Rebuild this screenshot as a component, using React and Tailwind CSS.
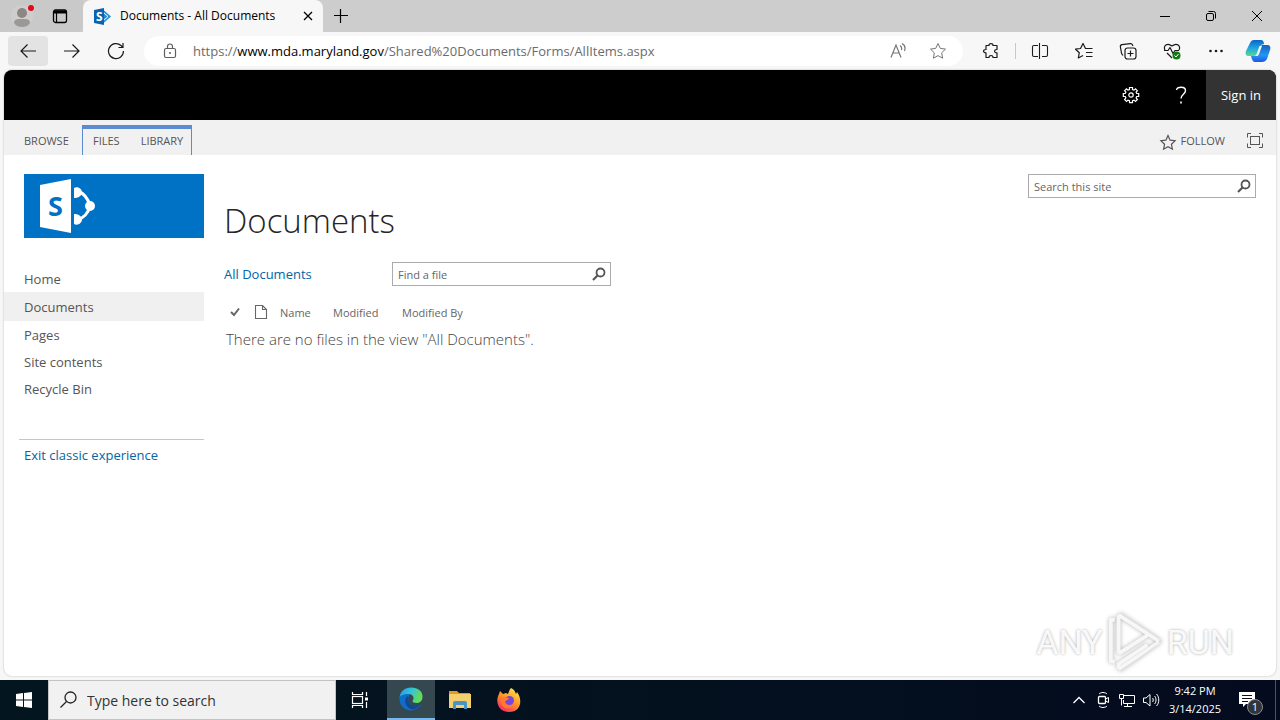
import { useState } from 'react';

const navItems = [
  { label: 'Home', height: 'h-[27px]' },
  { label: 'Documents', height: 'h-[29px]', active: true },
  { label: 'Pages', height: 'h-[27px]' },
  { label: 'Site contents', height: 'h-[27px]' },
  { label: 'Recycle Bin', height: 'h-[27px]' }
];

function Icon({ size = 16, className = '', children }) {
  return (
    <svg
      width={size}
      height={size}
      viewBox={`0 0 ${size} ${size}`}
      fill="none"
      stroke="currentColor"
      className={`shrink-0 ${className}`}
      aria-hidden="true"
    >
      {children}
    </svg>
  );
}

function ToolButton({ label, className = '', children }) {
  return (
    <button
      aria-label={label}
      className={`w-10 h-[30px] shrink-0 flex items-center justify-center rounded hover:bg-gray-200 ${className}`}
    >
      {children}
    </button>
  );
}

function SharePointBadge() {
  return (
    <svg width="17" height="17" viewBox="0 0 17 17" className="shrink-0" aria-hidden="true">
      <path d="M9 1.500l8 7-8 7z" fill="#2a8dd4" />
      <path d="M10 5l4 3.500-4 3.500" fill="none" stroke="#fff" strokeWidth="1" />
      <path d="M0 2l10-2v17L0 15z" fill="#0b64b0" />
      <text x="2" y="13" fontSize="12" fontWeight="700" fill="#fff" fontFamily="Open Sans, sans-serif">S</text>
    </svg>
  );
}

function TabBar() {
  return (
    <div className="h-8 flex items-stretch bg-[#cdcdcd]">
      <div className="w-[83px] flex items-center pl-[11px] gap-[18px] bg-[#c9c9c9] rounded-br-md">
        <button aria-label="Profile" className="w-[23px] flex justify-center">
          <svg width="24" height="24" viewBox="0 0 24 24" className="shrink-0" aria-hidden="true">
            <circle cx="11" cy="12" r="11" fill="#d0cecc" />
            <circle cx="11" cy="9" r="5" fill="#8b8785" />
            <path d="M3 19c0-4 3-4 8-4s8 0 8 4c-2 3-5 4-8 4s-6-1-8-4z" fill="#9b9896" />
            <circle cx="20" cy="4" r="3" fill="#e00b1c" />
          </svg>
        </button>
        <button aria-label="Tab actions">
          <Icon size={16}>
            <rect x="1.500" y="2" width="13" height="12.500" rx="2" strokeWidth="1.300" />
            <path d="M2 4h12" strokeWidth="3" />
            <path d="M4.500 5v9" strokeWidth="1.200" />
          </Icon>
        </button>
      </div>
      <div className="w-60 flex items-center pl-[11px] pr-2 gap-[9px] bg-[#f7f7f7] rounded-t-lg">
        <SharePointBadge />
        <span className="flex-1 text-xs text-black whitespace-nowrap">Documents - All Documents</span>
        <button aria-label="Close tab">
          <Icon size={14}>
            <path d="M3 3l8 8M11 3l-8 8" strokeWidth="1.300" />
          </Icon>
        </button>
      </div>
      <button aria-label="New tab" className="w-9 flex items-center justify-center">
        <Icon size={16}>
          <path d="M7.500 1v14M1 7.500h14" strokeWidth="1.200" />
        </Icon>
      </button>
      <div className="ml-auto flex">
        <button aria-label="Minimize" className="w-[46px] flex items-center justify-center">
          <Icon size={12}>
            <path d="M1 6.500h10" />
          </Icon>
        </button>
        <button aria-label="Restore" className="w-[46px] flex items-center justify-center">
          <Icon size={12}>
            <rect x="1.500" y="3.500" width="7" height="7" rx="1.500" />
            <path d="M3.500 1.500h5a2 2 0 0 1 2 2v5" />
          </Icon>
        </button>
        <button aria-label="Close" className="w-[46px] flex items-center justify-center">
          <Icon size={12}>
            <path d="M1 1l10 10M11 1L1 11" />
          </Icon>
        </button>
      </div>
    </div>
  );
}

function Toolbar() {
  return (
    <div className="h-[38px] flex items-center pl-2 pr-1 gap-1 bg-[#f7f7f7] text-[#1b1b1b]">
      <ToolButton label="Back" className="bg-[#e3e3e3]">
        <Icon size={18}>
          <path d="M17 9H2M8.500 2.500L2 9l6.500 6.500" strokeWidth="1.200" />
        </Icon>
      </ToolButton>
      <ToolButton label="Forward">
        <Icon size={18}>
          <path d="M1 9h15M9.500 2.500L16 9l-6.500 6.500" strokeWidth="1.200" />
        </Icon>
      </ToolButton>
      <ToolButton label="Refresh">
        <Icon size={18}>
          <path d="M16.500 9a7.500 7.500 0 1 1-2.500-5.500L16 5.500M16 1v4.500h-4.500" strokeWidth="1.200" />
        </Icon>
      </ToolButton>
      <div className="flex-1 h-[30px] flex items-center pl-[18px] pr-[5px] ml-1 mr-1 bg-white rounded-full">
        <Icon size={16} className="text-[#5f5f5f]">
          <rect x="2.500" y="5.500" width="11" height="9" rx="1.500" strokeWidth="1.200" />
          <path d="M5.500 5.500V3.500a2.500 2.500 0 0 1 5 0v2" strokeWidth="1.200" />
          <circle cx="8" cy="10" r="1" fill="currentColor" stroke="none" />
        </Icon>
        <div className="flex-1 ml-[15px] pt-px text-[13px] whitespace-nowrap text-[#6b6b6b]">
          https://<span className="text-black">www.mda.maryland.gov</span>/Shared%20Documents/Forms/AllItems.aspx
        </div>
        <ToolButton label="Read aloud" className="text-[#767676]">
          <Icon size={18}>
            <path d="M2 15.500L7 3l5 12.500M3.500 11h7M11 3.500c1.500 1 2 2.500 1.500 4.500M13 1.500c3 1.500 3.500 4.500 2.500 7.500" strokeWidth="1.200" />
          </Icon>
        </ToolButton>
        <ToolButton label="Add to favorites" className="text-[#767676]">
          <Icon size={18}>
            <path d="M9 1.500l2.300 4.900 5.200.7-3.800 3.700.9 5.400L9 13.600l-4.600 2.600.9-5.400-3.800-3.700 5.200-.7z" strokeLinejoin="round" />
          </Icon>
        </ToolButton>
      </div>
      <ToolButton label="Extensions" className="-mr-1">
        <Icon size={18}>
          <path d="M4 3.500h3c-.2-2.600 4.200-2.600 4 0h4v4c-3.200-.3-3.200 3.600 0 3.300v4.700h-4c.2-2.700-4.200-2.700-4 0H4v-4.700c-3.300.2-3.300-3.600 0-3.300z" strokeWidth="1.200" strokeLinejoin="round" />
        </Icon>
      </ToolButton>
      <div className="w-px h-4 ml-1 bg-[#c8c8c8]"></div>
      <ToolButton label="Split screen">
        <Icon size={18}>
          <path d="M7 3.500H3a1.500 1.500 0 0 0-1.500 1.500v8a1.500 1.500 0 0 0 1.500 1.500H7M11 3.500h4a1.500 1.500 0 0 1 1.500 1.500v8a1.500 1.500 0 0 1-1.500 1.500H11M8.500 1v16" strokeWidth="1.100" />
        </Icon>
      </ToolButton>
      <ToolButton label="Favorites">
        <Icon size={18}>
          <path d="M10.500 6.500L8 1.500 5.500 6.500l-5 .7 3.800 3.500-1 5.300L8 13.500M10 6.500h7.500M11 10.500h6.500M11 14.500h6.500" strokeWidth="1.200" strokeLinejoin="round" />
        </Icon>
      </ToolButton>
      <ToolButton label="Collections">
        <Icon size={18}>
          <rect x="6" y="6" width="11" height="11" rx="2.500" strokeWidth="1.200" />
          <path d="M11.500 8.500v6M8.500 11.500h6M14 4l-.5-1a2 2 0 0 0-2.200-1.400L3 2.700A2 2 0 0 0 1.400 5l1.200 6.500L4 13.500" strokeWidth="1.200" />
        </Icon>
      </ToolButton>
      <ToolButton label="Browser essentials">
        <Icon size={18}>
          <path d="M2 8C0 4 4 0 9 4c5-4 9 0 7 4M1 8.500h4l2-3 3 6 2-3h4M4 11l5 5" strokeWidth="1.200" strokeLinejoin="round" />
          <circle cx="13.500" cy="13.500" r="4" fill="#107c10" stroke="none" />
          <path d="M11.500 13.500l1.500 1.500 2.500-3" stroke="#fff" />
        </Icon>
      </ToolButton>
      <ToolButton label="Settings and more">
        <Icon size={16}>
          <g fill="currentColor" stroke="none">
            <circle cx="2.500" cy="8" r="1.300" />
            <circle cx="8" cy="8" r="1.300" />
            <circle cx="13.500" cy="8" r="1.300" />
          </g>
        </Icon>
      </ToolButton>
      <button aria-label="Copilot" className="w-9 flex justify-center shrink-0">
        <svg width="26" height="26" viewBox="0 0 26 26" aria-hidden="true">
          <defs>
            <linearGradient id="pilotLeft" x1="0" y1="0" x2="0" y2="1">
              <stop offset="0" stopColor="#0b63c7" />
              <stop offset="0.5" stopColor="#20a5e2" />
              <stop offset="1" stopColor="#5bd78c" />
            </linearGradient>
            <linearGradient id="pilotRight" x1="0" y1="0" x2="0" y2="1">
              <stop offset="0" stopColor="#1761bd" />
              <stop offset="0.6" stopColor="#2497f3" />
              <stop offset="1" stopColor="#2254e6" />
            </linearGradient>
          </defs>
          <path d="M9 2h7c2 0 3 2 3 4l-3 1-3 8c-1 2-2 3-4 3H4c-3 0-4-2-3-5L5 5c1-2 2-3 4-3z" fill="url(#pilotLeft)" />
          <path d="M17 24h-7c-2 0-3-2-4-6h3c2 0 3-1 4-3l3-7 1-1h5c3 0 4 2 3 5l-3 9c-1 2-3 3-5 3z" fill="url(#pilotRight)" />
          <path d="M14.500 8H17l-3 8c-.5 1.500-1.500 2-2.500 2H9.500c1.500-.5 2-1.500 2.500-3z" fill="#f1f8ff" />
        </svg>
      </button>
    </div>
  );
}

function SuiteBar() {
  return (
    <div className="h-[50px] flex items-stretch justify-end bg-black text-white">
      <button aria-label="Settings" className="w-[50px] flex items-center justify-center">
        <Icon size={18}>
          <path d="M7.500 1.500h3v2l1.500.6 1.500-1.300 1.900 1.900-1.300 1.500.6 1.300h2v3h-2l-.6 1.500 1.300 1.500-1.900 1.900-1.500-1.300-1.500.6v2h-3v-2L6 14.100l-1.500 1.300-1.900-1.900L3.900 12l-.6-1.500h-2v-3h2l.6-1.300-1.300-1.500 1.900-1.900L6 4.100l1.500-.6z" strokeWidth="1.200" />
          <circle cx="9" cy="9" r="2.200" strokeWidth="1.200" />
        </Icon>
      </button>
      <button aria-label="Help" className="w-[50px] flex items-center justify-center">
        <Icon size={18}>
          <path d="M4.500 4C5 .5 13.500 0 13.500 4.500c0 3.500-4.500 4-4.500 8" strokeWidth="1.400" />
          <path d="M9 15.500v2" strokeWidth="1.600" />
        </Icon>
      </button>
      <button className="w-[70px] pt-0.5 text-[13px] bg-[#333333]">Sign in</button>
    </div>
  );
}

function Ribbon() {
  return (
    <div className="h-[35px] flex items-stretch bg-[#f1f1f1] text-[#555555] text-[11px]">
      <button className="w-[78px] pl-5 pt-2 text-left">BROWSE</button>
      <div className="w-[110px] mt-[5px] flex gap-[21px] pl-2.5 border-t-4 border-x border-[#5b8bd0]">
        <button className="pb-0.5">FILES</button>
        <button className="pb-0.5">LIBRARY</button>
      </div>
      <div className="ml-auto flex items-center pt-2 pr-3">
        <button className="flex items-center gap-1 mr-[21px]">
          <Icon size={18}>
            <path d="M9 2.500l2.100 4.700 5 .5-3.700 3.500 1 5L9 13.700l-4.400 2.500 1-5-3.700-3.500 5-.5z" strokeWidth="1.200" />
          </Icon>
          FOLLOW
        </button>
        <button aria-label="Focus on content" className="pb-0.5">
          <Icon size={18}>
            <path d="M1.500 5.500v-4H5M13 1.500h3.500v4M16.500 11.500v4H13M5 15.500H1.500v-4" />
            <rect x="4.500" y="4.500" width="9" height="8" />
          </Icon>
        </button>
      </div>
    </div>
  );
}

function SearchBox({ label, width }) {
  const [value, setValue] = useState('');

  return (
    <form
      onSubmit={(e) => e.preventDefault()}
      className={`${width} h-6 flex items-center border border-[#ababab] bg-white`}
    >
      <input
        type="text"
        aria-label={label}
        value={value}
        onChange={(e) => setValue(e.target.value)}
        placeholder={label}
        className="flex-1 min-w-0 h-[22px] px-[5px] text-[11px] leading-5 text-[#444444] placeholder:text-[#666666] outline-none"
      />
      <button aria-label={`Submit: ${label}`} className="w-[22px] flex justify-center text-[#555555]">
        <Icon size={14}>
          <circle cx="8.500" cy="5.500" r="4" strokeWidth="1.800" />
          <path d="M5.500 8.500L1 13" strokeWidth="2.200" />
        </Icon>
      </button>
    </form>
  );
}

function SiteLogo() {
  return (
    <a href="#home" aria-label="Site home" className="block ml-5 h-16 bg-[#0072c6]">
      <svg width="80" height="64" viewBox="0 0 80 64" aria-hidden="true">
        <path d="M16 11l31-6v54l-31-6z" fill="#fff" />
        <text x="24" y="42" fontSize="27" fontWeight="700" fill="#0072c6" fontFamily="Noto Sans, sans-serif">S</text>
        <path d="M53 17c7 2 11 7 13 15-2 8-6 12-13 14" fill="none" stroke="#fff" strokeWidth="3" />
        <path d="M50 14c4-2 8 1 8 4.500S54 24 50 24zM50 50c4 2 8-1 8-4.500S54 40 50 40z" fill="#fff" />
        <circle cx="66" cy="32" r="5" fill="#fff" />
      </svg>
    </a>
  );
}

function Sidebar() {
  return (
    <aside className="w-[200px] shrink-0 pt-[19px]">
      <SiteLogo />
      <nav className="mt-[27px] text-[13px] text-[#555555]">
        {navItems.map((item) => (
          <a
            key={item.label}
            href={`#${item.label}`}
            className={`flex items-center pl-5 pt-0.5 ${item.height} ${item.active ? 'bg-[#f0f0f0]' : ''}`}
          >
            {item.label}
          </a>
        ))}
      </nav>
      <div className="mt-[37px] ml-[15px] pl-[5px] pt-1.5 border-t border-[#c6c6c6] text-[13px]">
        <a href="#classic" className="text-[#0066a8]">Exit classic experience</a>
      </div>
    </aside>
  );
}

function DocumentList() {
  return (
    <table className="mt-4 text-left text-[#666666]">
      <thead>
        <tr className="h-[21px] text-[11px]">
          <th className="w-7 pl-1 font-normal">
            <Icon size={14}>
              <path d="M3 6l3 3L11 2.500" strokeWidth="2" />
            </Icon>
          </th>
          <th className="w-7 pl-0.5 font-normal">
            <Icon size={16}>
              <path d="M1.500.5h7l4 4v9h-11zM8.500.5v4h4" strokeWidth="1.100" />
            </Icon>
          </th>
          <th className="w-[53px] pt-0.5 font-normal">Name</th>
          <th className="w-[69px] pt-0.5 font-normal">Modified</th>
          <th className="pt-0.5 font-normal">Modified By</th>
        </tr>
      </thead>
      <tbody>
        <tr>
          <td colSpan={5} className="h-8 pl-0.5 text-[15px] font-light whitespace-nowrap text-[#444444]">
            There are no files in the view "All Documents".
          </td>
        </tr>
      </tbody>
    </table>
  );
}

function Watermark() {
  return (
    <div className="absolute right-[42px] bottom-0.5 flex items-center gap-1 text-[34px] leading-none text-white/90 font-['Roboto','Liberation_Sans',sans-serif] text-shadow-[0_0_3px_#a8a8a8] pointer-events-none">
      <span>ANY</span>
      <svg width="56" height="64" viewBox="0 0 58 64" className="drop-shadow-[0_0_2px_#b0b0b0]" aria-hidden="true">
        <path d="M8 9H4v43h4M12 4v40M12 4l42 27M12 44l30-19M12 60l42-28M12 60v-5l30-20" fill="none" stroke="#f7f7f7" strokeWidth="4" strokeLinejoin="round" />
        <path d="M14 1L57 31 14 63" fill="none" stroke="#e4e4e4" strokeWidth="1" />
      </svg>
      <span>RUN</span>
    </div>
  );
}

function Taskbar() {
  return (
    <footer className="h-10 flex items-stretch bg-linear-to-r from-[#03161f] to-[#040b1e] text-white">
      <button aria-label="Start" className="w-12 flex items-center justify-center">
        <svg width="16" height="16" viewBox="0 0 16 16" fill="#fff" aria-hidden="true">
          <path d="M0 2l7-1v6.500H0zM8 1l8-1v7.500H8zM0 8.500h7V15l-7-1zM8 8.500h8V16l-8-1z" />
        </svg>
      </button>
      <div className="w-72 flex items-center pl-[11px] bg-[#f1f1f1] border border-[#c4c4c4] text-[#222222]">
        <Icon size={18}>
          <circle cx="10.500" cy="6.500" r="5.500" strokeWidth="1.300" />
          <path d="M6.500 10.500L.5 16.500" strokeWidth="1.300" />
        </Icon>
        <input
          type="text"
          aria-label="Type here to search"
          placeholder="Type here to search"
          className="flex-1 min-w-0 pl-[9px] pt-0.5 text-sm outline-none placeholder:text-[#333333]"
        />
      </div>
      <button aria-label="Task view" className="w-12 mr-[3px] flex items-center justify-center">
        <Icon size={18}>
          <path d="M1.500 1v2.500h10V1M1.500 17v-2.500h10V17M15.500 1v4M15.500 11v6" strokeWidth="1.200" />
          <rect x="1.500" y="5.500" width="10" height="7" strokeWidth="1.200" />
          <path d="M14 8h3" strokeWidth="3" />
        </Icon>
      </button>
      <button aria-label="Microsoft Edge" className="w-12 flex items-center justify-center bg-[#35474f] border-b-2 border-[#76b9ed]">
        <svg width="24" height="24" viewBox="0 0 24 24" aria-hidden="true">
          <defs>
            <linearGradient id="edgeTop" x1="0" y1="0" x2="1" y2="0.3">
              <stop offset="0" stopColor="#2698e0" />
              <stop offset="0.5" stopColor="#2fc2df" />
              <stop offset="1" stopColor="#66dc55" />
            </linearGradient>
          </defs>
          <path d="M.5 12C.5 4 8 5 11 7c-2 3-3 7 1 10 3 2 7 2 10 0-2 4-6 6.500-10 6.500C5.500 23.500.5 18.500.5 12z" fill="#0f6cc9" />
          <path d="M.5 11C1 4 6 .5 12 .5c7 0 12 4 11.500 9.500 0 4-3 6-6 6-3 0-4-1-4-2 0-1 1-1 1-3s-2-4-5-4c-5 0-9 2-9 4z" fill="url(#edgeTop)" />
          <path d="M9 9c-3 2-4 6-1 10 2 3 5 4 8 3 2-1 4-3 5.500-5-5 3-11 1-12-3-.5-2-.5-3-.5-5z" fill="#114a8b" />
        </svg>
      </button>
      <button aria-label="File Explorer" className="w-[49px] flex items-center justify-center">
        <svg width="22" height="20" viewBox="0 0 22 20" aria-hidden="true">
          <path d="M0 1h8l2 2h11v15H0z" fill="#e39a1f" />
          <path d="M0 4h22v14H0z" fill="#f5cf6c" />
          <path d="M4 19v-6q0-2 2-2h10q2 0 2 2v6h-3v-4H7v4z" fill="#4795c8" />
        </svg>
      </button>
      <button aria-label="Firefox" className="w-[49px] flex items-center justify-center">
        <svg width="24" height="24" viewBox="0 0 24 24" aria-hidden="true">
          <defs>
            <linearGradient id="foxBody" x1="0.8" y1="0" x2="0.2" y2="1">
              <stop offset="0" stopColor="#ffe84a" />
              <stop offset="0.5" stopColor="#ff9127" />
              <stop offset="1" stopColor="#f5226c" />
            </linearGradient>
          </defs>
          <path d="M14 0c4 2 4 4 5 6l1-2c6 8 4 20-8 20C1 24-2 13 2 6l1-3 3 3 3-1c1 0 1 1 2 1 1-2 1-4 3-6z" fill="url(#foxBody)" />
          <circle cx="12.500" cy="12.500" r="4.500" fill="#7547e0" />
          <path d="M4 10c3-2 5 0 8 0-1 3-4 2-4 4 0 3 6 5 9 2-2 6-12 6-13-2z" fill="#ff7a2e" />
        </svg>
      </button>
      <div className="ml-auto flex items-center">
        <button aria-label="Show hidden icons" className="w-6 flex justify-center">
          <Icon size={14}>
            <path d="M1.500 10L7 4.500l5.500 5.500" strokeWidth="1.300" />
          </Icon>
        </button>
        <button aria-label="Meet now" className="w-6 flex justify-center">
          <Icon size={18}>
            <rect x="4.500" y="5.500" width="7" height="7" rx="1" strokeWidth="1.300" />
            <path d="M11.500 8l3-1.500v5l-3-1.500M5 3c2-2 6-2 8 0M5 15c2 2 6 2 8 0" />
          </Icon>
        </button>
        <button aria-label="Network" className="w-6 flex justify-center">
          <Icon size={18}>
            <path d="M6 4.500h10.500v8H5.500V9M9.500 12.500v3M6 15.500h8M1.500 3.500h4v4h-4zM3.500 7.500v7" />
          </Icon>
        </button>
        <button aria-label="Volume" className="w-6 flex justify-center">
          <Icon size={18}>
            <path d="M1.500 7v4.500H4l4 3.500V3.500L4 7zM10.500 7c1 1 1 3 0 4M12.500 5c2 2 2 6 0 8M14.500 3c3 3 3 9 0 12" />
          </Icon>
        </button>
        <div className="w-16 text-center text-[11px] leading-[18px] whitespace-nowrap">
          <div>9:42 PM</div>
          <div>3/14/2025</div>
        </div>
        <button aria-label="Notifications" className="relative w-12 h-full pr-2 flex items-center justify-center">
          <svg width="16" height="16" viewBox="0 0 16 16" aria-hidden="true">
            <path d="M0 0h16v12h-9l-3 3v-3H0z" fill="#fff" />
            <path d="M3 3.500h10M3 6.500h10M3 9.500h6" stroke="#06101f" />
          </svg>
          <span className="absolute left-5 top-[19px] size-4 rounded-full border border-[#8b8b8b] bg-[#30343b] text-[11px] leading-[14px] text-center">1</span>
        </button>
        <div className="w-[5px] h-full border-l border-[#4b5566]"></div>
      </div>
    </footer>
  );
}

export default function App() {
  return (
    <div className="min-h-screen flex flex-col bg-[#f7f7f7] font-['Open_Sans','Noto_Sans',sans-serif]">
      <TabBar />
      <Toolbar />
      <main className="relative flex-1 flex flex-col mx-1 mb-1 overflow-hidden rounded-lg bg-white shadow-[0_0_2px_#b0b0b0]">
        <SuiteBar />
        <Ribbon />
        <div className="flex-1 flex">
          <Sidebar />
          <div className="flex-1 pl-5 pr-5 pt-[19px]">
            <div className="flex items-start justify-between">
              <h1 className="pt-[21px] text-[33px] leading-[51px] font-light text-[#262626]">Documents</h1>
              <SearchBox label="Search this site" width="w-[228px]" />
            </div>
            <div className="mt-4 flex items-center">
              <a href="#all" className="w-[168px] pt-0.5 text-[13px] text-[#0066a8]">All Documents</a>
              <SearchBox label="Find a file" width="w-[219px]" />
            </div>
            <DocumentList />
          </div>
        </div>
        <Watermark />
      </main>
      <Taskbar />
    </div>
  );
}
